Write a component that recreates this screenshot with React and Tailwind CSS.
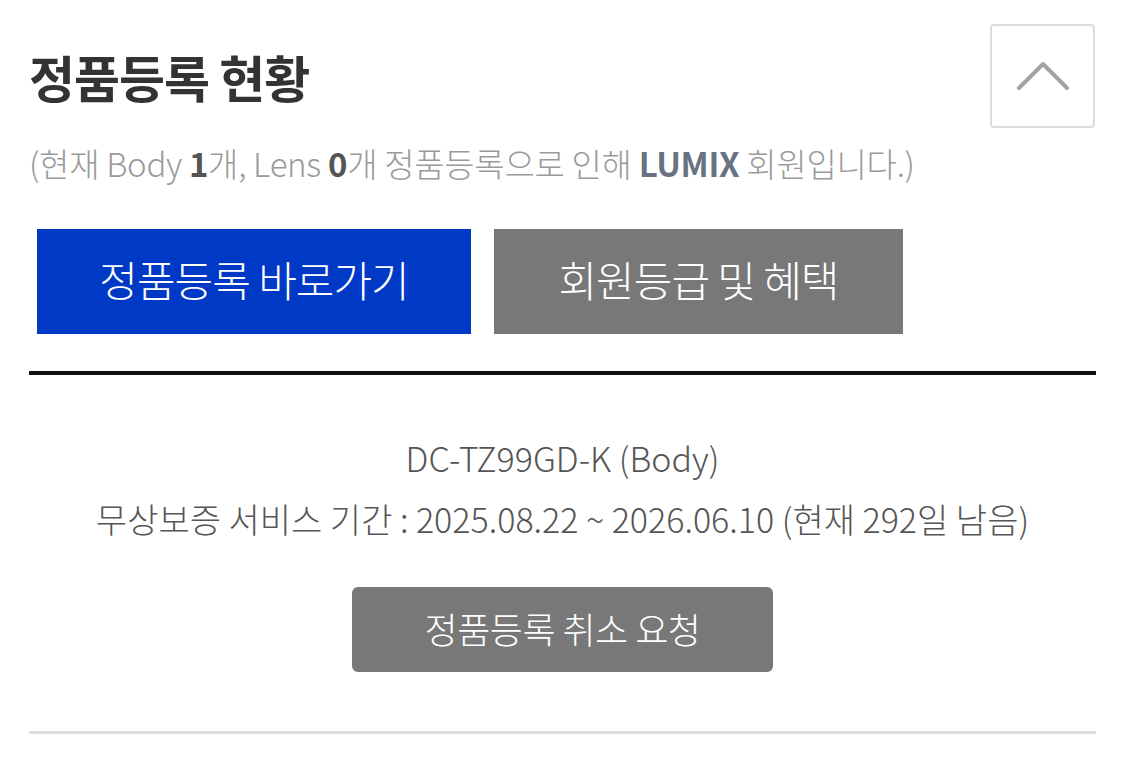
const font = { fontFamily: '"Noto Sans CJK KR", "Noto Sans", sans-serif' };

export default function App() {
  return (
    <div className="min-h-screen bg-white" style={font}>
      <div className="px-[29px] pt-[24px]">
        {/* header */}
        <div className="flex items-start justify-between">
          <h2 className="mt-[22px] text-[50px] font-bold leading-[60px] tracking-[-1px] text-[#333]">
            정품등록 현황
          </h2>
          <button className="mr-[1px] flex h-[104px] w-[105px] items-center justify-center rounded-[4px] border-2 border-[#dcdcdc] bg-white">
            <svg width="54" height="30" viewBox="0 0 54 30" fill="none">
              <polyline
                points="3,27 27,3 51,27"
                stroke="#a3a3a3"
                strokeWidth="4"
                strokeLinecap="round"
                strokeLinejoin="round"
              />
            </svg>
          </button>
        </div>

        <p className="mt-[13px] text-[33px] font-light leading-[44px] tracking-[-0.3px] text-[#9a9a9a]">
          (현재 Body <b className="font-bold text-[#555]">1</b>개, Lens{" "}
          <b className="font-bold text-[#555]">0</b>개 정품등록으로 인해{" "}
          <b className="font-bold text-[#687282]">LUMIX</b> 회원입니다.)
        </p>

        <div className="mt-[44px] flex gap-[23px] pl-[8px]">
          <button className="flex h-[105px] w-[434px] items-center justify-center bg-[#0039c6] pb-[6px] text-[42px] font-light tracking-[-1px] text-white">
            정품등록 바로가기
          </button>
          <button className="flex h-[105px] w-[409px] items-center justify-center bg-[#787878] pb-[6px] text-[42px] font-light tracking-[-1px] text-white">
            회원등급 및 혜택
          </button>
        </div>

        <div className="mt-[37px] h-[4px] bg-[#111]" />

        {/* product */}
        <div className="flex flex-col items-center pt-[61px] pb-[59px]">
          <div className="text-[34px] font-light leading-[44px] text-[#555]">
            DC-TZ99GD-K (Body)
          </div>
          <div className="mt-[17px] text-[34px] font-light leading-[44px] text-[#555]">
            무상보증 서비스 기간 : 2025.08.22 ~ 2026.06.10 (현재 292일 남음)
          </div>
          <button className="mt-[46px] flex h-[85px] w-[421px] items-center justify-center rounded-[6px] bg-[#787878] pb-[4px] text-[36px] font-light tracking-[-0.5px] text-white">
            정품등록 취소 요청
          </button>
        </div>

        <div className="h-[3px] bg-[#dedede]" />
      </div>
    </div>
  );
}
